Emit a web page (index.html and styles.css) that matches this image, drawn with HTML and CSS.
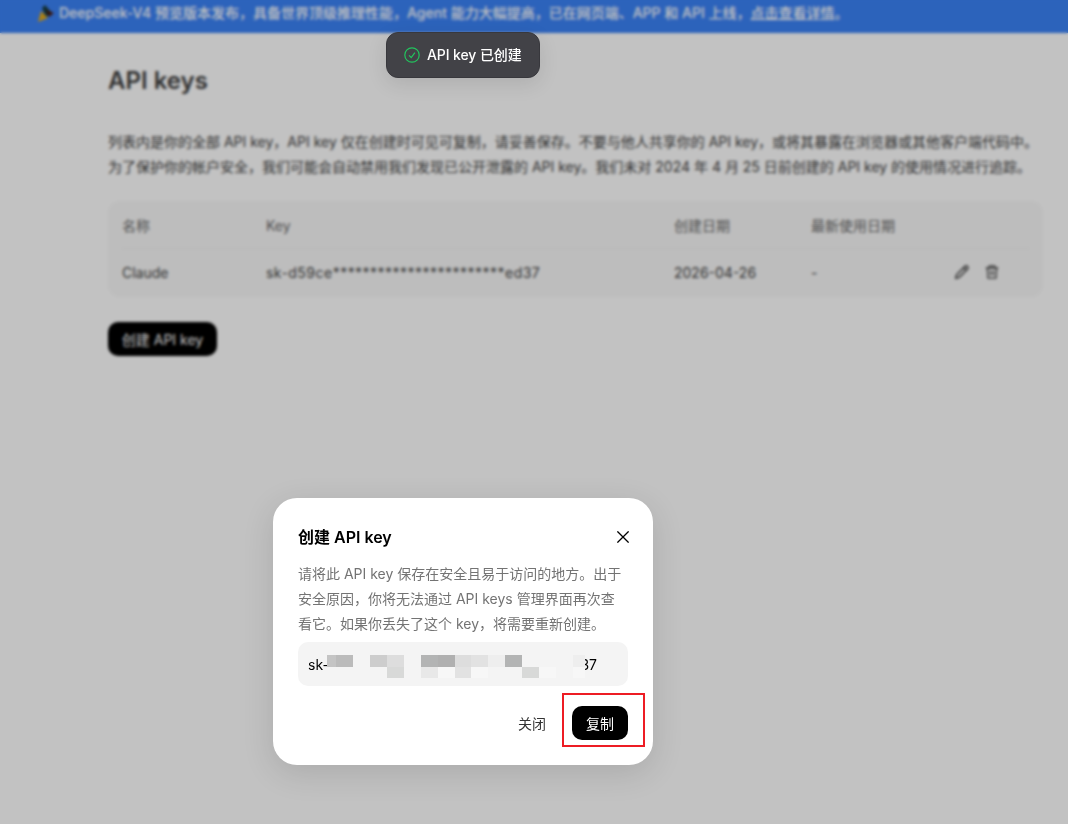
FILE: index.html
```html
<!DOCTYPE html>
<html lang="zh-CN">
<head>
  <meta charset="UTF-8">
  <meta name="viewport" content="width=device-width, initial-scale=1.0">
  <title>API keys</title>
  <link rel="stylesheet" href="styles.css">
</head>
<body>
  <div class="page">
    <div class="banner">
      <svg class="party" width="17" height="17" viewBox="0 0 17 17">
        <path d="M5 3 L8 0 L15 8 L9 12 Z" fill="#173b3c"/>
        <path d="M9 5 L17 8 L12 12 Z" fill="#4a1a10"/>
        <path d="M1 17 L4 6 L11 13 Z" fill="#e2a917"/>
      </svg>
      <span>DeepSeek-V4 预览版本发布，具备世界顶级推理性能，Agent 能力大幅提高，已在网页端、APP 和 API 上线，<a href="#">点击查看详情</a>。</span>
    </div>

    <main class="content">
      <h1>API keys</h1>
      <p class="intro">列表内是你的全部 API key，API key 仅在创建时可见可复制，请妥善保存。不要与他人共享你的 API key，或将其暴露在浏览器或其他客户端代码中。<br>为了保护你的帐户安全，我们可能会自动禁用我们发现已公开泄露的 API key。我们未对 2024 年 4 月 25 日前创建的 API key 的使用情况进行追踪。</p>

      <div class="key-table">
        <div class="row head">
          <span>名称</span>
          <span>Key</span>
          <span>创建日期</span>
          <span>最新使用日期</span>
          <span></span>
        </div>
        <div class="row">
          <span>Claude</span>
          <span class="key">sk-d59ce***********************ed37</span>
          <span>2026-04-26</span>
          <span>-</span>
          <span class="actions">
            <svg width="16" height="16" viewBox="0 0 16 16" fill="none" stroke="currentColor" stroke-width="1.5">
              <path d="M1.8 14.2 L2.6 10.8 L11 2.4 Q12.2 1.2 13.4 2.4 Q14.8 3.7 13.6 5 L5.2 13.4 Z M9.6 3.8 L12.2 6.4"/>
            </svg>
            <svg width="16" height="16" viewBox="0 0 16 16" fill="none" stroke="currentColor" stroke-width="1.3">
              <path d="M1.8 4 H14.2 M5.4 4 V1.8 H10.6 V4 M3.4 4 L4 14.2 H12 L12.6 4 M6.6 6.8 V11.2 M9.4 6.8 V11.2"/>
            </svg>
          </span>
        </div>
      </div>

      <button class="btn create-btn">创建 API key</button>
    </main>
  </div>

  <div class="overlay"></div>

  <div class="toast">
    <svg width="16" height="16" viewBox="0 0 16 16" fill="none" stroke="#22c55e" stroke-width="1.2">
      <circle cx="8" cy="8" r="7.2"/>
      <path d="M5 8.4 L7.2 10.5 L10.9 5.6"/>
    </svg>
    <span>API key 已创建</span>
  </div>

  <div class="modal">
    <div class="modal-header">
      <h2>创建 API key</h2>
      <svg class="close" width="12" height="12" viewBox="0 0 12 12" fill="none" stroke="#000" stroke-width="1.3">
        <path d="M0.4 0.4 L11.6 11.6 M11.6 0.4 L0.4 11.6"/>
      </svg>
    </div>
    <p class="modal-text">请将此 API key 保存在安全且易于访问的地方。出于<br>安全原因，你将无法通过 API keys 管理界面再次查<br>看它。如果你丢失了这个 key，将需要重新创建。</p>
    <div class="key-box">
      <span>sk-</span>
      <span class="key-end">37</span>
      <div class="mosaic">
        <i class="c4"></i><i class="bb"></i><i></i><i class="cd"></i><i class="dd"></i><i></i><i class="b3"></i><i class="b0"></i><i class="dd"></i><i class="e2"></i><i class="ee"></i><i class="b3"></i><i></i><i></i><i></i><i class="ee"></i>
        <i></i><i></i><i></i><i></i><i class="d8"></i><i></i><i class="e8"></i><i class="f7"></i><i class="e2"></i><i class="f7"></i><i></i><i></i><i class="d8"></i><i class="f7"></i><i></i><i class="f7"></i>
      </div>
    </div>
    <div class="modal-footer">
      <button class="btn plain-btn">关闭</button>
      <button class="btn copy-btn">复制</button>
    </div>
  </div>
</body>
</html>
```
FILE: styles.css
```css
* {
  box-sizing: border-box;
}
body {
  margin: 0;
  height: 824px;
  overflow: hidden;
  background-color: #fff;
  color: #404040;
  font-family: Inter, "Noto Sans CJK SC", sans-serif;
  font-size: 14px;
}
.page {
  height: 824px;
}
.banner {
  display: flex;
  height: 33px;
  padding: 0 0 7px 37px;
  align-items: center;
  gap: 5px;
  background-color: #3b82f6;
  color: #fff;
  font-weight: 500;
  white-space: nowrap;
}
.banner span {
  padding-bottom: 2px;
}
.banner a {
  color: inherit;
}
.content {
  padding: 32px 25px 0 108px;
}
h1 {
  margin: 0 0 32px;
  font-size: 24px;
  line-height: 32px;
  font-weight: 600;
}
.intro {
  margin: 0 0 22px;
  line-height: 25px;
  white-space: nowrap;
}
.key-table {
  height: 96px;
  padding: 1px 14px;
  border-radius: 12px;
  background-color: #f9f9f9;
}
.row {
  display: grid;
  grid-template-columns: 144px 408px 137px 143px 1fr;
  height: 46px;
  align-items: center;
}
.head {
  height: 47px;
  border-bottom: 1px solid #eee;
  color: #666;
}
.key {
  letter-spacing: 0.48px;
}
.actions {
  display: flex;
  gap: 14px;
}
/* Buttons */
.btn {
  height: 34px;
  padding: 0;
  border: none;
  border-radius: 10px;
  font-family: inherit;
  font-size: 14px;
  cursor: pointer;
}
.create-btn {
  width: 109px;
  margin-top: 25px;
  background-color: #000;
  color: #fff;
}
.overlay {
  position: fixed;
  inset: 0;
  background-color: rgba(0, 0, 0, 0.24);
  backdrop-filter: blur(1.7px);
}
/* Toast */
.toast {
  position: fixed;
  top: 32px;
  left: 386px;
  display: flex;
  width: 154px;
  height: 46px;
  padding-left: 17px;
  align-items: center;
  gap: 7px;
  border: 1px solid #38383d;
  border-radius: 12px;
  background-color: #424247;
  color: #fff;
  font-weight: 500;
  box-shadow: 0 6px 20px rgba(0, 0, 0, 0.1);
  white-space: nowrap;
}
.toast span {
  padding-bottom: 2px;
  letter-spacing: -0.1px;
}
/* Modal styles */
.modal {
  position: fixed;
  top: 498px;
  left: 273px;
  width: 380px;
  height: 267px;
  padding: 25px;
  border-radius: 24px;
  background-color: #fff;
  box-shadow: 0 8px 32px rgba(0, 0, 0, 0.12);
}
.modal-header {
  display: flex;
  height: 28px;
  margin-right: -1px;
  align-items: center;
  justify-content: space-between;
}
h2 {
  margin: 0;
  padding-bottom: 2px;
  color: #000;
  font-size: 16px;
  font-weight: 600;
}
.modal-text {
  margin: 10px 0 6px;
  color: #737373;
  line-height: 25px;
  white-space: nowrap;
}
.key-box {
  position: relative;
  display: flex;
  height: 44px;
  padding: 0 31px 0 10px;
  align-items: center;
  justify-content: space-between;
  border-radius: 10px;
  background-color: #f4f4f4;
  color: #000;
}
.mosaic {
  position: absolute;
  top: 13px;
  left: 29px;
  display: grid;
  grid-template-columns: 9px repeat(7, 17px) 16px repeat(6, 17px) 12px;
  grid-template-rows: 12px 11px;
}
.mosaic i {
  background-color: #f4f4f4;
}
.mosaic .b0 { background-color: #b0b0b0; }
.mosaic .b3 { background-color: #b3b4b4; }
.mosaic .bb { background-color: #bbb; }
.mosaic .c4 { background-color: #c4c4c4; }
.mosaic .cd { background-color: #cdcdcd; }
.mosaic .d8 { background-color: #d8d9d8; }
.mosaic .dd { background-color: #ddd; }
.mosaic .e2 { background-color: #e2e2e2; }
.mosaic .e8 { background-color: #e8e8e8; }
.mosaic .ee { background-color: #eee; }
.mosaic .f7 { background-color: #f7f7f7; }
.modal-footer {
  display: flex;
  margin-top: 20px;
  justify-content: flex-end;
  gap: 12px;
}
.plain-btn {
  width: 56px;
  background-color: transparent;
  color: #333;
}
.copy-btn {
  position: relative;
  width: 56px;
  background-color: #000;
  color: #fff;
}
/* red frame around the copy button */
.copy-btn::after {
  content: "";
  position: absolute;
  top: -13px;
  left: -10px;
  width: 79px;
  height: 50px;
  border: 2px solid #ed1c24;
}
```
